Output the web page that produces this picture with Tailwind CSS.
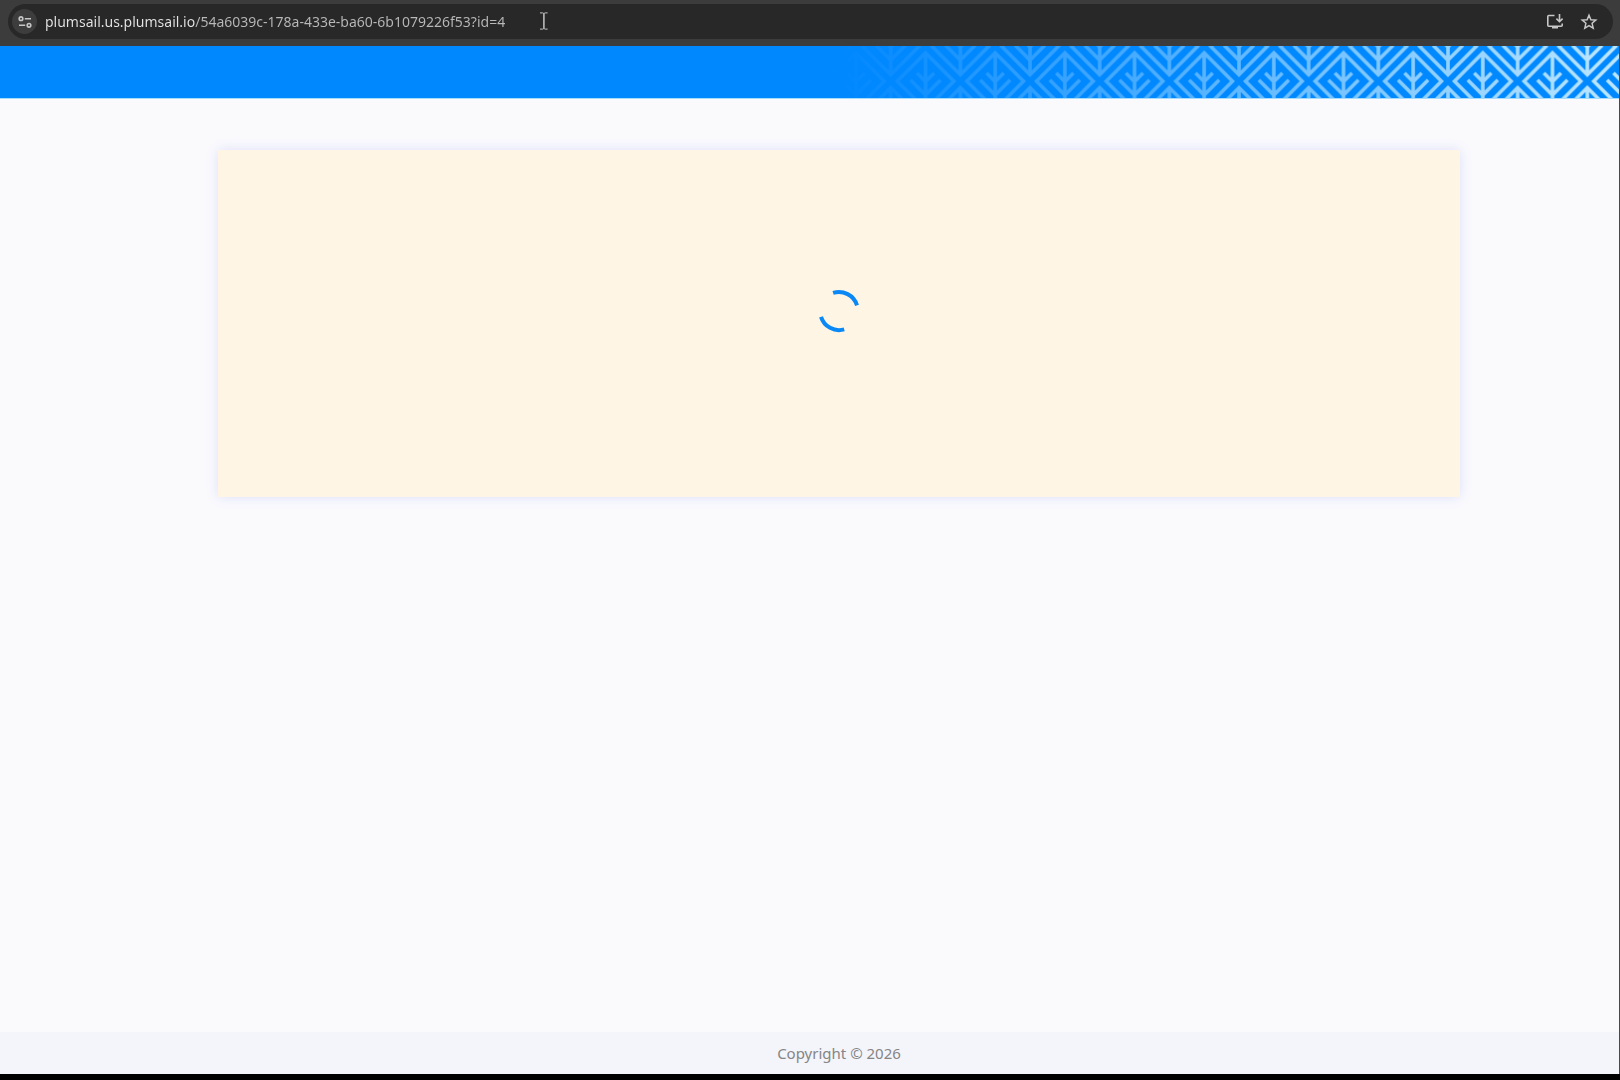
<!DOCTYPE html>
<html lang="en">
<head>
<meta charset="utf-8">
<meta name="viewport" content="width=device-width, initial-scale=1">
<title>Form</title>
<script src="https://cdn.jsdelivr.net/npm/@tailwindcss/browser@4"></script>
</head>
<body class="flex min-h-screen flex-col bg-black font-['Noto_Sans',sans-serif]">
  <!-- Browser address bar -->
  <div class="flex h-[46px] shrink-0 items-start bg-[#3c3c3c] pt-1 pr-[7px] pl-2">
    <div class="relative flex h-[35px] flex-1 items-center rounded-full bg-[#282828] pr-[15px] pl-1">
      <button type="button" aria-label="View site information" class="flex size-[25px] items-center justify-center rounded-full bg-[#3d3d3d] text-[#c7c7c7]">
        <svg class="size-4" viewBox="0 0 16 16" fill="none" stroke="currentColor" stroke-width="1.6">
          <circle cx="4" cy="4.7" r="1.8"/><path d="M7.8 4.7H14M2 11.3h6.2"/><circle cx="12" cy="11.3" r="1.8"/>
        </svg>
      </button>
      <input type="text" aria-label="Address" spellcheck="false" value="plumsail.us.plumsail.io/54a6039c-178a-433e-ba60-6b1079226f53?id=4" class="ml-2 h-6 min-w-0 flex-1 bg-[linear-gradient(to_right,#e6e6e6_150px,#b9b9b9_150px)] bg-clip-text text-[14px] text-transparent outline-none">
      <div class="flex items-center gap-4 text-[#c7c7c7]">
        <button type="button" aria-label="Install app">
          <svg class="size-[18px]" viewBox="0 0 18 18" fill="none" stroke="currentColor" stroke-width="1.6">
            <path d="M8.5 2.5H2.8q-1 0-1 1v8.7q0 1 1 1h12.4q1 0 1-1v-1.7M13.5 1v7.2M10.4 5.6l3.1 3.1 3.1-3.1"/><path d="M6 13.2h6v2.3H6z" fill="currentColor" stroke="none"/>
          </svg>
        </button>
        <button type="button" aria-label="Bookmark this page">
          <svg class="size-[18px]" viewBox="0 0 18 18" fill="none" stroke="currentColor" stroke-width="1.5">
            <path d="m9 2.2 1.9 4.5 4.9.4-3.7 3.2 1.1 4.8L9 12.6l-4.2 2.5 1.1-4.8-3.7-3.2 4.9-.4z"/>
          </svg>
        </button>
      </div>
      <!-- Text pointer -->
      <svg class="absolute top-2 left-[531px] h-[18px] w-2.5" viewBox="0 0 10 18" fill="none" stroke="#c4c4c4" stroke-width="1"><path d="M1 .9h2.6q1.2 0 1.2 1.2v13.8q0 1.2-1.2 1.2H1M8.6.9H6.2Q5 .9 5 2.1v13.8q0 1.2 1.2 1.2h2.4"/></svg>
    </div>
  </div>

  <div class="mb-1.5 flex flex-1 flex-col border-r border-[#484848] bg-[#fafafd]">
    <header class="flex h-[53px] shrink-0 justify-end border-b border-[#a5dcfb] bg-[#0088ff]">
      <svg class="h-[52px] w-[780px]" viewBox="839 46 780 52" fill="none">
        <defs>
          <linearGradient id="fade" gradientUnits="userSpaceOnUse" x1="839" y1="0" x2="1619" y2="0">
            <stop offset="0" stop-color="#fff" stop-opacity="0"/><stop offset="1" stop-color="#fff" stop-opacity="1"/>
          </linearGradient>
          <mask id="fadeMask" style="mask-type:alpha" maskUnits="userSpaceOnUse" x="839" y="46" width="780" height="52"><path fill="url(#fade)" d="M839 46h780v52H839z"/></mask>
          <pattern id="leaves" patternUnits="userSpaceOnUse" x="890.7" y="46.4" width="69.66" height="69.66">
            <g id="leaf" stroke="#bde7ff" stroke-width="3.6">
              <path d="M34.83 6.5 63.13 34.83 34.83 63.13 6.5 34.83zM34.83 6.5V63.1M19.8 33.6l15 15 15-15M26.2 26.7l8.6 8.6 8.6-8.6"/>
            </g>
            <use href="#leaf" x="-34.83" y="-34.83"/><use href="#leaf" x="34.83" y="-34.83"/>
            <use href="#leaf" x="-34.83" y="34.83"/><use href="#leaf" x="34.83" y="34.83"/>
          </pattern>
        </defs>
        <path fill="url(#leaves)" mask="url(#fadeMask)" d="M839 46h780v52H839z"/>
      </svg>
    </header>

    <main class="flex-1 pt-[51px] pr-[159px] pl-[218px]">
      <section aria-busy="true" aria-label="Loading form" class="flex h-[347px] items-center justify-center bg-[#fef5e5] shadow-[0_0_12px_#dedffa]">
        <svg class="mt-[-26px] size-12" viewBox="0 0 48 48" fill="none" stroke="#0a88f5" stroke-width="4">
          <path d="M18.1 5.9A19 19 0 0 1 42 18.3M6 29.8A19 19 0 0 0 29.2 42.4"/>
        </svg>
      </section>
    </main>

    <footer class="flex h-[42px] items-center justify-center bg-[#f4f4fb] pl-[59px] text-[15px] text-[#858585]">Copyright © 2026</footer>
  </div>
</body>
</html>
